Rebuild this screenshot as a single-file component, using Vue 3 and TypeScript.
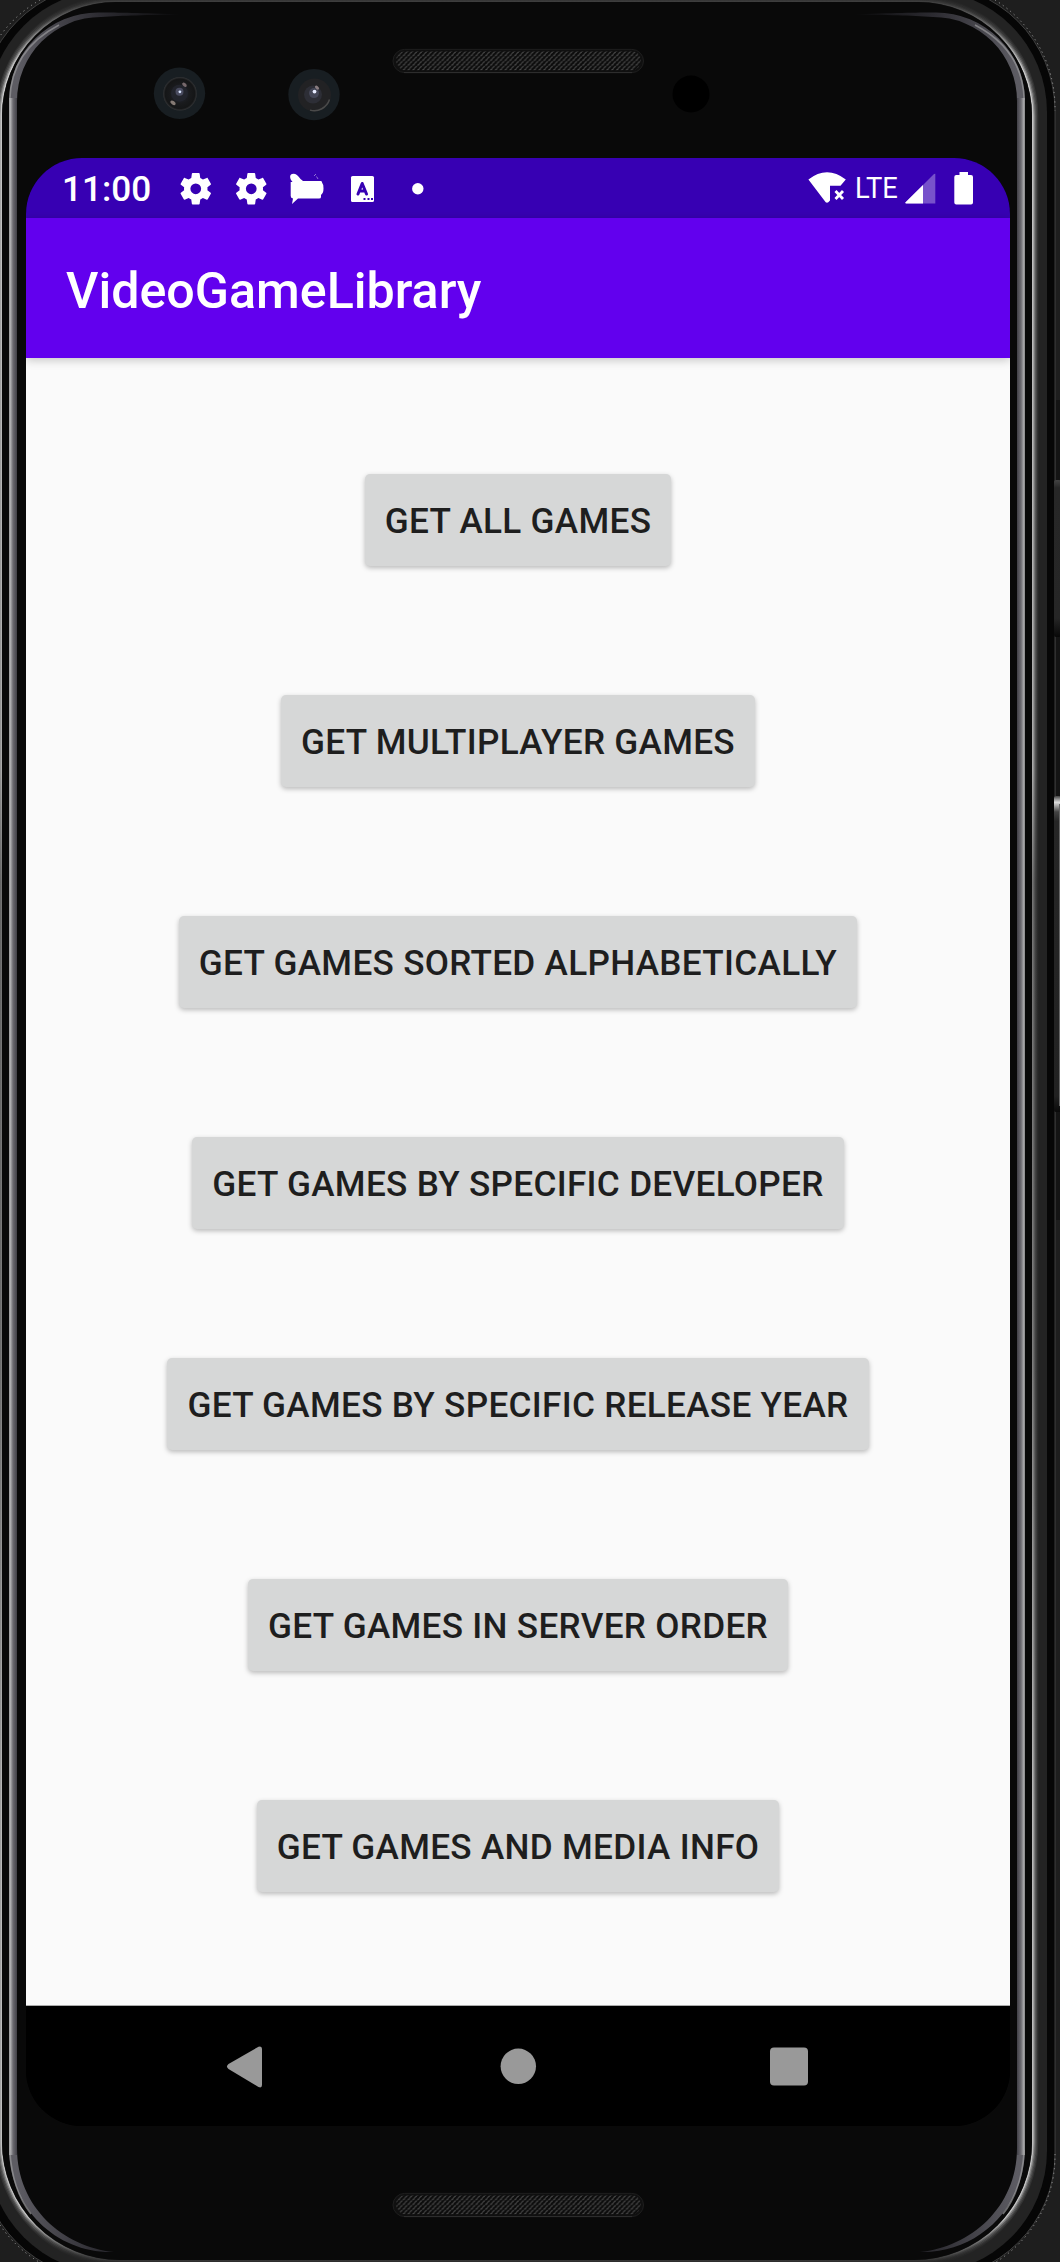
<script setup lang="ts">
const actions: string[] = [
  'Get all games',
  'Get multiplayer games',
  'Get games sorted alphabetically',
  'Get games by specific developer',
  'Get games by specific release year',
  'Get games in server order',
  'Get games and media info',
]

const gear =
  'M19.14 12.94c.04-.3.06-.61.06-.94 0-.32-.02-.64-.07-.94l2.03-1.58c.18-.14.23-.41.12-.61l-1.92-3.32c-.12-.22-.37-.29-.59-.22l-2.39.96c-.5-.38-1.03-.7-1.62-.94l-.36-2.54c-.04-.24-.24-.41-.48-.41h-3.84c-.24 0-.43.17-.47.41l-.36 2.54c-.59.24-1.13.57-1.62.94l-2.39-.96c-.22-.08-.47 0-.59.22L2.74 8.87c-.12.21-.08.47.12.61l2.03 1.58c-.05.3-.09.63-.09.94s.02.64.07.94l-2.03 1.58c-.18.14-.23.41-.12.61l1.92 3.32c.12.22.37.29.59.22l2.39-.96c.5.38 1.03.7 1.62.94l.36 2.54c.05.24.24.41.48.41h3.84c.24 0 .44-.17.47-.41l.36-2.54c.59-.24 1.13-.56 1.62-.94l2.39.96c.22.08.47 0 .59-.22l1.92-3.32c.12-.22.07-.47-.12-.61l-2.01-1.58zM12 15.3A3.3 3.3 0 1 1 12 8.7a3.3 3.3 0 0 1 0 6.600z'

// Closed outline of the phone body: separate radii for the top and bottom corners.
function body(l: number, t: number, r: number, b: number, rt: number, rb: number): string {
  return (
    `M${l + rt} ${t}H${r - rt}A${rt} ${rt} 0 0 1 ${r} ${t + rt}V${b - rb}` +
    `A${rb} ${rb} 0 0 1 ${r - rb} ${b}H${l + rb}A${rb} ${rb} 0 0 1 ${l} ${b - rb}` +
    `V${t + rt}A${rt} ${rt} 0 0 1 ${l + rt} ${t}Z`
  )
}

const shine = [
  { d: 5.5, o: 0.1 },
  { d: 4.2, o: 0.2 },
  { d: 3, o: 0.32 },
  { d: 1.9, o: 0.55 },
  { d: 0.8, o: 0.95 },
].map(({ d, o }) => ({ o, path: body(2 - d, 2 - d, 1032 + d, 2260 + d, 114 + d, 118 + d) }))
</script>

<template>
  <div class="device">
    <svg class="frame" width="1060" height="2262" viewBox="0 0 1060 2262">
      <defs>
        <linearGradient id="edge" gradientUnits="userSpaceOnUse" x1="0" y1="0" x2="0" y2="2262">
          <stop offset="0" stop-color="#3c3c3c" />
          <stop offset=".006" stop-color="#555" />
          <stop offset=".03" stop-color="#d0d0d0" />
          <stop offset=".34" stop-color="#b0b0b0" />
          <stop offset=".39" stop-color="#777" />
          <stop offset=".6" stop-color="#808080" />
          <stop offset=".8" stop-color="#c0c0c0" />
          <stop offset=".98" stop-color="#c8c8c8" />
          <stop offset="1" stop-color="#303030" />
        </linearGradient>
        <linearGradient id="bezelR" gradientUnits="userSpaceOnUse" x1="1016.5" y1="0" x2="1025.5" y2="0">
          <stop offset="0" stop-color="#3c3b42" />
          <stop offset=".5" stop-color="#6b6a70" />
          <stop offset=".8" stop-color="#a8a8aa" />
          <stop offset="1" stop-color="#777" />
        </linearGradient>
        <linearGradient id="bezelL" gradientUnits="userSpaceOnUse" x1="17.5" y1="0" x2="8.5" y2="0">
          <stop offset="0" stop-color="#3c3b42" />
          <stop offset=".5" stop-color="#6b6a70" />
          <stop offset=".8" stop-color="#b4b4b6" />
          <stop offset="1" stop-color="#888" />
        </linearGradient>
        <linearGradient id="tip" gradientUnits="userSpaceOnUse" x1="850" y1="0" x2="1017" y2="0">
          <stop offset="0" stop-color="#09090a" />
          <stop offset=".5" stop-color="#2c2b31" />
          <stop offset="1" stop-color="#5d5c63" />
        </linearGradient>
        <linearGradient id="tipL" gradientUnits="userSpaceOnUse" x1="184" y1="0" x2="17" y2="0">
          <stop offset="0" stop-color="#09090a" />
          <stop offset=".5" stop-color="#2c2b31" />
          <stop offset="1" stop-color="#5d5c63" />
        </linearGradient>
        <linearGradient id="vol" x1="0" y1="0" x2="0" y2="1">
          <stop offset="0" stop-color="#444" />
          <stop offset=".02" stop-color="#ddd" />
          <stop offset=".05" stop-color="#444" />
          <stop offset=".08" stop-color="#262626" />
          <stop offset=".95" stop-color="#222" />
          <stop offset="1" stop-color="#0a0a0a" />
        </linearGradient>
        <linearGradient id="power" x1="0" y1="0" x2="0" y2="1">
          <stop offset="0" stop-color="#444" />
          <stop offset=".05" stop-color="#272727" />
          <stop offset=".88" stop-color="#262626" />
          <stop offset="1" stop-color="#080808" />
        </linearGradient>
        <radialGradient id="lens">
          <stop offset="0" stop-color="#44455a" />
          <stop offset=".3" stop-color="#20222a" />
          <stop offset=".6" stop-color="#191a1c" />
          <stop offset=".88" stop-color="#151617" />
          <stop offset="1" stop-color="#333436" />
        </radialGradient>
        <pattern id="mesh" width="4.85" height="4.8" patternUnits="userSpaceOnUse">
          <rect width="4.85" height="4.8" fill="#0c0c0c" />
          <path d="M.3 2.200L2.600 .5M2.400 4.600L4.600 2.900" stroke="#545454" stroke-width="1" />
        </pattern>
      </defs>

      <rect x="1056" y="400" width="4" height="820" fill="#141414" />
      <path :d="body(-20, -16, 1055, 2279, 127, 125)" fill="#060606" stroke="#4a4a4a" stroke-width=".8" />
      <path d="M995 0A127 127 0 0 1 1055 111M1055 2154A125 125 0 0 1 996 2262M40 0A127 127 0 0 0 0 36M0 2225A125 125 0 0 0 39 2262" fill="none" stroke="#999" stroke-width="1" stroke-dasharray="1.2 3.5" />
      <path :d="body(-12, -10, 1047, 2273, 122, 122)" fill="#232323" />
      <path v-for="s in shine" :key="s.o" :d="s.path" fill="none" stroke="url(#edge)" stroke-width="1.6" :opacity="s.o" />
      <path :d="body(2, 2, 1032, 2260, 114, 118)" fill="#090909" />

      <path d="M850 14.5C895 13 915 12.5 936 12.5A89 89 0 0 1 1025 101V2148C1025 2210 975 2254 920 2252C970 2247 1017 2208 1017 2148V101A84 84 0 0 0 933 17C910 15.5 890 15 850 14.5Z" fill="url(#tip)" />
      <path d="M184 14.5C139 13 119 12.5 98 12.5A89 89 0 0 0 9 101V2148C9 2210 59 2254 114 2252C64 2247 17 2208 17 2148V101A84 84 0 0 1 101 17C124 15.5 144 15 184 14.5Z" fill="url(#tipL)" />
      <path d="M1017 98H1025V2155H1017Z" fill="url(#bezelR)" />
      <path d="M9 98H17V2155H9Z" fill="url(#bezelL)" />
      <path d="M975 25Q1023 50 1024.2 100M1024.2 2150Q1022 2190 1003 2214M59 25Q11 50 9.8 100M9.8 2150Q12 2190 31 2214" fill="none" stroke="#a0a0a2" stroke-width="1.6" opacity=".65" />

      <rect x="1054" y="480" width="7" height="157" rx="2" fill="url(#power)" />
      <rect x="1054" y="796" width="7" height="316" rx="2" fill="url(#vol)" />
      <path d="M1059.5 804V1106" stroke="#666" />

      <g v-for="y in [49, 2193]" :key="y" :transform="`translate(0 ${y})`">
        <rect x="393" y=".4" width="250.500" height="23.2" rx="11.6" fill="#101010" stroke="#1e1e1e" />
        <path d="M404 23.6H632" stroke="#303030" />
        <rect x="396" y="2" width="245" height="19.2" rx="9.6" fill="url(#mesh)" />
      </g>

      <g transform="translate(179.5 93.3)">
        <circle r="25.7" fill="#181e22" />
        <circle r="16.8" cx=".5" cy=".5" fill="url(#lens)" />
        <circle r="8.500" fill="#22242c" />
        <circle r="4" cy="-1.500" fill="#4a4c60" />
        <circle r="1.400" cx=".4" cy="-1.500" fill="#d8e4ff" />
        <ellipse rx="2.600" ry="1.600" transform="translate(5 -8.500) rotate(40)" fill="#77696c" />
        <ellipse rx="3" ry="1.800" transform="translate(-6.500 9.500) rotate(35)" fill="#857a74" />
      </g>
      <g transform="translate(314 94.6)">
        <circle r="25.7" fill="#181e22" />
        <circle r="16.5" cx=".5" cy=".5" fill="#222224" />
        <path d="M15.500 5A16 16 0 0 1 -4 15.500" fill="none" stroke="#4a4a4a" stroke-width="1.500" />
        <circle r="9" cx="-1" fill="#2d2e36" />
        <circle r="5" cy="-1.500" fill="#454757" />
        <circle r="1.900" cx=".5" cy="-3" fill="#e8ecff" />
        <ellipse rx="2.400" ry="1.500" transform="translate(3 -7) rotate(40)" fill="#8a7d80" />
      </g>
      <circle cx="691" cy="94" r="18.5" fill="#000" />
    </svg>

    <main class="screen">
      <header class="status">
        <span class="clock">11:00</span>
        <svg class="notes" width="260" height="40" viewBox="0 0 260 40" fill="#fff">
          <path :d="gear" transform="translate(.2 -.8) scale(1.63)" />
          <path :d="gear" transform="translate(55.700 -.8) scale(1.63)" />
          <path d="M116.500 12C114 9 113 5 116 4Q120 2.500 124.500 9L127 11H145Q146 11 146 12.500Q148 15 147.500 18.500Q147.500 23 145 25V27Q145 28.500 143 28.500H122L116 34L117 28.500Q114.700 28 114.700 26V12Z" />
          <path d="M138 6L140 4M140.500 6.500L142 9" stroke="#fff" stroke-opacity=".45" fill="none" />
          <rect x="175" y="6" width="23" height="26" rx="1.6" />
          <path d="M182 24L186.200 13.500L190.500 24M183.500 21H189" fill="none" stroke="#3700b3" stroke-width="3" stroke-linecap="round" stroke-linejoin="round" />
          <path d="M187.500 29h2M191.500 29h2M195 29h2" stroke="#3700b3" stroke-width="2" />
          <circle cx="241.800" cy="18.700" r="5.700" />
        </svg>
        <svg class="signals left" width="44" height="40" viewBox="0 0 44 40">
          <path d="M.4 9.500Q19 -5 37.800 9.500L32.500 15.700H22V30.500L20.300 32.300Q19 33.200 17.700 32.300Z" fill="#fff" />
          <path d="M27.500 21L35 29M35 21L27.500 29" stroke="#fff" stroke-width="2.800" />
        </svg>
        <span class="lte">LTE</span>
        <svg class="signals" width="74" height="40" viewBox="0 0 74 40">
          <path d="M30.300 3.800V33.500H1Q0 33.500 .5 32.500L29 4Z" fill="#fff" fill-opacity=".32" />
          <path d="M18 15V33.500H1Q-.3 33 .5 32.300Z" fill="#fff" />
          <path d="M54.500 2H63V5H66Q68 5 68 7V32.500Q68 34.500 66 34.500H51.300Q49.300 34.500 49.300 32.500V7Q49.300 5 51.300 5H54.500Z" fill="#fff" />
        </svg>
      </header>

      <div class="toolbar"><h1>VideoGameLibrary</h1></div>

      <section class="content">
        <button v-for="label in actions" :key="label" type="button">{{ label }}</button>
      </section>

      <nav class="nav">
        <svg width="984" height="120" viewBox="0 0 984 120" fill="#999">
          <path d="M202.500 58L232.500 40.700Q236 39.500 236 43V79Q236 82.500 232.500 81L202.500 63Q199.500 60.500 202.500 58Z" />
          <circle cx="492.300" cy="60.300" r="17.700" />
          <rect x="744" y="41.500" width="38" height="38" rx="4" />
        </svg>
      </nav>
    </main>
  </div>
</template>

<style>
body {
  margin: 0;
  background: #1e1e1e;
}
</style>

<style scoped>
.device {
  position: relative;
  box-sizing: border-box;
  width: 1060px;
  height: 2262px;
  padding: 158px 50px 136px 26px;
  overflow: hidden;
  background: #1e1e1e;
  font-family: Roboto, sans-serif;
}
.frame {
  position: absolute;
  inset: 0;
}
.screen {
  position: relative;
  display: flex;
  flex-direction: column;
  width: 984px;
  height: 1968px;
  overflow: hidden;
  border-radius: 56px;
  background: #000;
}
.status {
  display: flex;
  align-items: center;
  flex: none;
  box-sizing: border-box;
  height: 60px;
  padding: 0 31px 0 36px;
  background: #3700b3;
  color: #fff;
}
.clock {
  width: 88px;
  padding-top: 1px;
  font-size: 35.2px;
  font-weight: 500;
  line-height: 60px;
  white-space: nowrap;
}
.status svg {
  display: block;
  flex: none;
  margin-top: 3px;
}
.notes {
  margin-left: 26px;
}
.signals.left {
  margin-left: auto;
}
.lte {
  width: 48px;
  margin-left: 2.5px;
  margin-right: 2.5px;
  font-size: 30px;
  line-height: 60px;
  white-space: nowrap;
  transform: scaleX(0.91);
  transform-origin: left;
}
.toolbar {
  z-index: 1;
  flex: none;
  height: 140px;
  background: #6200ee;
  box-shadow: 0 2px 9px rgba(0, 0, 0, 0.22);
}
h1 {
  margin: 0;
  padding-left: 40px;
  color: #fff;
  font-size: 50.2px;
  font-weight: 500;
  line-height: 146px;
}
.content {
  display: flex;
  flex: 1;
  flex-direction: column;
  align-items: center;
  gap: 129px;
  padding-top: 115.6px;
  background: #fafafa;
}
button {
  height: 92px;
  padding: 3px 20px 0;
  border: 0;
  border-radius: 5px;
  background: #d6d7d7;
  box-shadow: 0 2px 5px rgba(0, 0, 0, 0.26);
  color: #1e1e1e;
  font: 500 35.15px/1 Roboto, sans-serif;
  letter-spacing: 0.3px;
  text-transform: uppercase;
  white-space: nowrap;
}
.nav {
  flex: 0 0 121px;
  background: #000;
  border-top: 1px solid #aaa;
  box-sizing: border-box;
}
.nav svg {
  display: block;
}
</style>
